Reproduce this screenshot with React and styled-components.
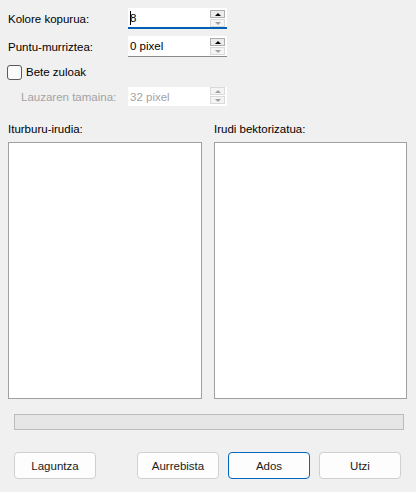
import React from 'react';
import styled, { createGlobalStyle } from 'styled-components';

const GlobalStyle = createGlobalStyle`
  html, body {
    margin: 0;
    padding: 0;
    background: #f0f0f0;
  }
  body {
    font-family: 'Segoe UI', 'Liberation Sans', sans-serif;
    font-size: 11.5px;
    color: #000;
  }
`;

const Dialog = styled.div`
  width: 416px;
  height: 492px;
  box-sizing: border-box;
  padding: 8px 8px 0 8px;
  display: flex;
  flex-direction: column;
  background: #f0f0f0;
`;

const FormRow = styled.div`
  display: flex;
  align-items: center;
  height: ${p => p.$h || 21}px;
  margin-top: ${p => p.$mt || 0}px;
`;

const Label = styled.div`
  width: ${p => (p.$indent ? 107 : 120)}px;
  padding-left: ${p => (p.$indent ? 13 : 0)}px;
  color: ${p => (p.$disabled ? '#a3a3a3' : '#000')};
  white-space: nowrap;
`;

const SpinBox = styled.div`
  position: relative;
  width: 99px;
  height: ${p => (p.$disabled ? 19 : 21)}px;
  box-sizing: border-box;
  background: #fff;
  border-bottom: ${p =>
    p.$focused ? '2px solid #005fb8' : p.$disabled ? 'none' : '1px solid #8a8a8a'};
  display: flex;
  align-items: center;
  padding-left: 2px;
  color: ${p => (p.$disabled ? '#a3a3a3' : '#000')};
`;

const Caret = styled.span`
  display: inline-block;
  width: 1px;
  height: 14px;
  background: #000;
  margin-right: -1px;
`;

const Spinners = styled.div`
  position: absolute;
  right: 2px;
  top: ${p => (p.$disabled ? 0 : 2)}px;
  display: flex;
  flex-direction: column;
  gap: 1px;
`;

const SpinButton = styled.div`
  width: 15px;
  height: 8px;
  box-sizing: border-box;
  border: 1px solid ${p => (p.$active ? '#adadad' : '#dadada')};
  background: ${p => (p.$active ? '#ececec' : '#f4f4f4')};
  display: flex;
  align-items: center;
  justify-content: center;
`;

const Arrow = styled.span`
  width: 0;
  height: 0;
  border-left: 3px solid transparent;
  border-right: 3px solid transparent;
  ${p =>
    p.$up
      ? `border-bottom: 3px solid ${p.$active ? '#000' : '#a0a0a0'};`
      : `border-top: 3px solid ${p.$active ? '#000' : '#a0a0a0'};`}
`;

const CheckRow = styled.label`
  display: flex;
  align-items: center;
  gap: 4px;
  height: 22px;
  margin-top: 4px;
  margin-left: -1px;
`;

const CheckBox = styled.span`
  width: 13px;
  height: 13px;
  border: 1px solid #5a5a5a;
  border-radius: 3px;
  background: #fbfbfb;
`;

const Panels = styled.div`
  display: grid;
  grid-template-columns: 194px 193px;
  column-gap: 12px;
  margin-top: 15px;
`;

const PanelColumn = styled.div`
  display: flex;
  flex-direction: column;
`;

const PanelLabel = styled.div`
  height: 16px;
  line-height: 16px;
  margin-bottom: 5px;
`;

const PreviewBox = styled.div`
  height: 257px;
  box-sizing: border-box;
  background: #fff;
  border: 1px solid #a0a0a0;
`;

const Progress = styled.div`
  height: 16px;
  box-sizing: border-box;
  margin: 15px 4px 0 6px;
  background: #e6e6e6;
  border: 1px solid #bcbcbc;
`;

const ButtonBar = styled.div`
  display: flex;
  gap: 9px;
  margin: 22px 7px 0 6px;
`;

const Button = styled.button`
  width: 83px;
  height: 27px;
  box-sizing: border-box;
  border-radius: 4px;
  border: 1px solid ${p => (p.$default ? '#0067c0' : '#d0d0d0')};
  background: #fdfdfd;
  font-family: inherit;
  font-size: 11.5px;
  color: #1a1a1a;
  padding: 0;
  margin-right: ${p => (p.$spaced ? 32 : 0)}px;
`;

const Spinner = ({ disabled }) => (
  <Spinners $disabled={disabled}>
    <SpinButton $active={!disabled}>
      <Arrow $up $active={!disabled} />
    </SpinButton>
    <SpinButton>
      <Arrow />
    </SpinButton>
  </Spinners>
);

export default function App() {
  return (
    <>
      <GlobalStyle />
      <Dialog>
        <FormRow>
          <Label>Kolore kopurua:</Label>
          <SpinBox $focused>
            <Caret />8
            <Spinner />
          </SpinBox>
        </FormRow>
        <FormRow $mt={7}>
          <Label>Puntu-murriztea:</Label>
          <SpinBox>
            0 pixel
            <Spinner />
          </SpinBox>
        </FormRow>
        <CheckRow>
          <CheckBox />
          Bete zuloak
        </CheckRow>
        <FormRow $h={19} $mt={4}>
          <Label $indent $disabled>Lauzaren tamaina:</Label>
          <SpinBox $disabled>
            32 pixel
            <Spinner disabled />
          </SpinBox>
        </FormRow>
        <Panels>
          <PanelColumn>
            <PanelLabel>Iturburu-irudia:</PanelLabel>
            <PreviewBox />
          </PanelColumn>
          <PanelColumn>
            <PanelLabel>Irudi bektorizatua:</PanelLabel>
            <PreviewBox />
          </PanelColumn>
        </Panels>
        <Progress />
        <ButtonBar>
          <Button $spaced>Laguntza</Button>
          <Button>Aurrebista</Button>
          <Button $default>Ados</Button>
          <Button>Utzi</Button>
        </ButtonBar>
      </Dialog>
    </>
  );
}
